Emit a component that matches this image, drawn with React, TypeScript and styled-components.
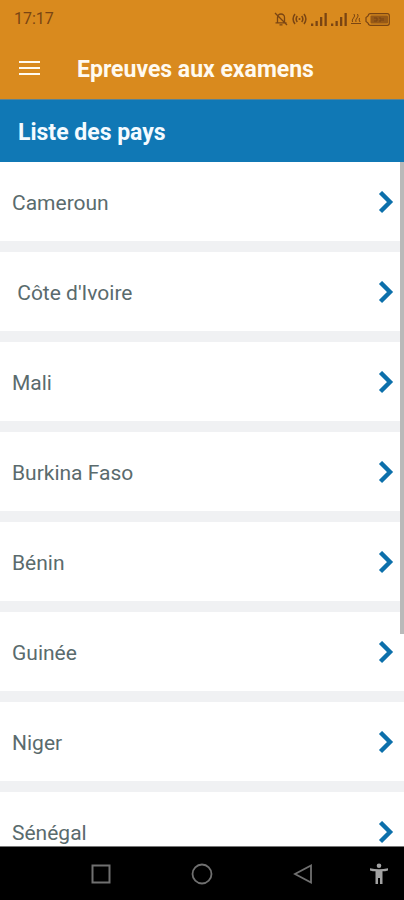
import React from "react";
import styled, { createGlobalStyle } from "styled-components";

const GlobalStyle = createGlobalStyle`
  *, *::before, *::after { box-sizing: border-box; }
  body { margin: 0; background: #ffffff; }
  button { font: inherit; color: inherit; background: none; border: 0; margin: 0; padding: 0; cursor: pointer; }
`;

const Screen = styled.div`
  display: flex;
  flex-direction: column;
  height: 100vh;
  font-family: Roboto, "Liberation Sans", sans-serif;
  background: #ffffff;
`;

const StatusBar = styled.div`
  display: flex;
  align-items: center;
  justify-content: space-between;
  height: 38px;
  flex: none;
  padding: 0 14px;
  background: #d98a1e;
  color: #7a4513;
  font-size: 16px;
  line-height: 20px;
`;

const StatusIcons = styled.div`
  display: flex;
  align-items: center;
  gap: 4px;

  svg { display: block; }
`;

const AppBar = styled.header`
  display: flex;
  align-items: center;
  gap: 36px;
  height: 61px;
  flex: none;
  padding: 0 19px;
  background: #d98a1e;
  color: #fffaf0;
`;

const MenuButton = styled.button`
  display: flex;

  svg { display: block; }
`;

const Title = styled.h1`
  margin: 0;
  padding-top: 2px;
  font-size: 23px;
  line-height: 28px;
  font-weight: 700;
`;

const SectionBar = styled.div`
  display: flex;
  align-items: center;
  height: 63px;
  flex: none;
  padding: 0 18px;
  border-top: 1px solid #5c8291;
  background: #1078b5;
  color: #f4fbff;
`;

const SectionTitle = styled.h2`
  margin: 0;
  padding-top: 4px;
  font-size: 23px;
  line-height: 28px;
  font-weight: 700;
`;

const ListArea = styled.main`
  position: relative;
  flex: 1;
  min-height: 0;
  overflow: hidden;
`;

const CountryList = styled.ul`
  display: flex;
  flex-direction: column;
  gap: 11px;
  margin: 0;
  padding: 0;
  list-style: none;
  background: #f0f1f3;
`;

const CountryRow = styled.button`
  display: flex;
  align-items: center;
  justify-content: space-between;
  width: 100%;
  height: 79px;
  padding: 3px 10px 0 12px;
  background: #ffffff;
  color: #5a6b6d;
  font-size: 21px;
  line-height: 28px;
  text-align: left;
  white-space: pre;

  svg { display: block; }
`;

const ScrollThumb = styled.div`
  position: absolute;
  top: 0;
  right: 0;
  width: 4px;
  height: 69%;
  background: #b9b9b9;
`;

const NavBar = styled.nav`
  display: grid;
  grid-template-columns: repeat(8, 1fr);
  align-items: center;
  height: 54px;
  flex: none;
  border-top: 1px solid #777777;
  background: #000000;
`;

const NavButton = styled.button<{ $start: number; $span: number }>`
  grid-column: ${(p) => p.$start} / span ${(p) => p.$span};
  display: flex;
  justify-content: center;
  color: #707070;

  svg { display: block; }
`;

const countries = [
  "Cameroun",
  " Côte d'Ivoire",
  "Mali",
  "Burkina Faso",
  "Bénin",
  "Guinée",
  "Niger",
  "Sénégal",
];

const MutedBell = () => (
  <svg width="14" height="14" viewBox="0 0 14 14" fill="none" stroke="currentColor" strokeWidth="1.3">
    <path d="M3.500 10.500V5.500a3.500 3.500 0 0 1 7 0v5M1.500 10.800h11M5.500 12.800h3M1 1l12 12" />
  </svg>
);

const Hotspot = () => (
  <svg width="15" height="12" viewBox="0 0 15 12" fill="none" stroke="currentColor" strokeWidth="1.5">
    <path d="M3 1Q-.8 6 3 11M12 1q3.800 5 0 10M5.300 3Q3 6 5.300 9M9.700 3Q12 6 9.700 9" />
    <circle cx="7.500" cy="6" r="1" fill="currentColor" stroke="none" />
  </svg>
);

const Signal = () => (
  <svg width="16" height="13" viewBox="0 0 16 13" fill="currentColor">
    <path d="M0 10.500h2.300v2.500H0zM4.500 8h2.300v5H4.500zM9 4h2.300v9H9zM13.500 0h2.300v13h-2.300z" />
  </svg>
);

const DataActivity = () => (
  <svg width="10" height="10" viewBox="0 0 10 10" fill="none" stroke="currentColor" strokeWidth="1">
    <path d="M3 0Q4.500 2 2.500 4T1.500 8M6.500 0Q8 2 6 4T5 8M8.500 4Q7.500 6 9 8M0 9.500h10" />
  </svg>
);

const Battery = () => (
  <svg width="25" height="13" viewBox="0 0 25 13">
    <path d="M5 .7h17.300a2 2 0 0 1 2 2v7.600a2 2 0 0 1-2 2H5Q3.500 12.300 3 10L1 8.500V4.500L3 3Q3.500.7 5 .7z" fill="none" stroke="currentColor" strokeWidth="1.2" />
    <rect x="5.500" y="2.500" width="17.500" height="8" rx="1" fill="currentColor" opacity=".7" />
    <path d="M9 5h3v3H9M14 5h2v3h-2M18 5v3" fill="none" stroke="#7a4513" strokeWidth="1" />
  </svg>
);

const Chevron = () => (
  <svg width="16" height="24" viewBox="0 0 16 24" fill="none" stroke="#0c70ab" strokeWidth="4.4">
    <path d="M2.500 1.500L12 11L2.500 20.500" />
  </svg>
);

export default function App() {
  return (
    <Screen>
      <GlobalStyle />
      <StatusBar>
        <time>17:17</time>
        <StatusIcons>
          <MutedBell />
          <Hotspot />
          <Signal />
          <Signal />
          <DataActivity />
          <Battery />
        </StatusIcons>
      </StatusBar>
      <AppBar>
        <MenuButton type="button" aria-label="Menu">
          <svg width="22" height="16" viewBox="0 0 22 16" fill="none" stroke="currentColor" strokeWidth="2">
            <path d="M0 1h21M0 7h21M0 13h21" />
          </svg>
        </MenuButton>
        <Title>Epreuves aux examens</Title>
      </AppBar>
      <SectionBar>
        <SectionTitle>Liste des pays</SectionTitle>
      </SectionBar>
      <ListArea>
        <CountryList>
          {countries.map((name) => (
            <li key={name}>
              <CountryRow type="button">
                <span>{name}</span>
                <Chevron />
              </CountryRow>
            </li>
          ))}
        </CountryList>
        <ScrollThumb />
      </ListArea>
      <NavBar>
        <NavButton type="button" aria-label="Recents" $start={2} $span={2}>
          <svg width="20" height="20" viewBox="0 0 20 20" fill="none" stroke="currentColor" strokeWidth="2">
            <rect x="1.500" y="1.500" width="17" height="17" />
          </svg>
        </NavButton>
        <NavButton type="button" aria-label="Home" $start={4} $span={2}>
          <svg width="22" height="22" viewBox="0 0 22 22" fill="none" stroke="currentColor" strokeWidth="1.8">
            <circle cx="11" cy="11" r="9.500" />
          </svg>
        </NavButton>
        <NavButton type="button" aria-label="Back" $start={6} $span={2}>
          <svg width="20" height="20" viewBox="0 0 20 20" fill="none" stroke="currentColor" strokeWidth="1.800">
            <path d="M18 1.500v17L2 10z" />
          </svg>
        </NavButton>
        <NavButton type="button" aria-label="Accessibility" $start={8} $span={1}>
          <svg width="20" height="22" viewBox="0 0 20 22" fill="#a2a2a2">
            <circle cx="10" cy="2.800" r="2.300" />
            <path d="M1 5.200Q10 7.200 19 5.200V7.400Q16 8.200 13.500 8.300V21H11V15H9V21H6.500V8.300Q4 8.200 1 7.400z" />
          </svg>
        </NavButton>
      </NavBar>
    </Screen>
  );
}
